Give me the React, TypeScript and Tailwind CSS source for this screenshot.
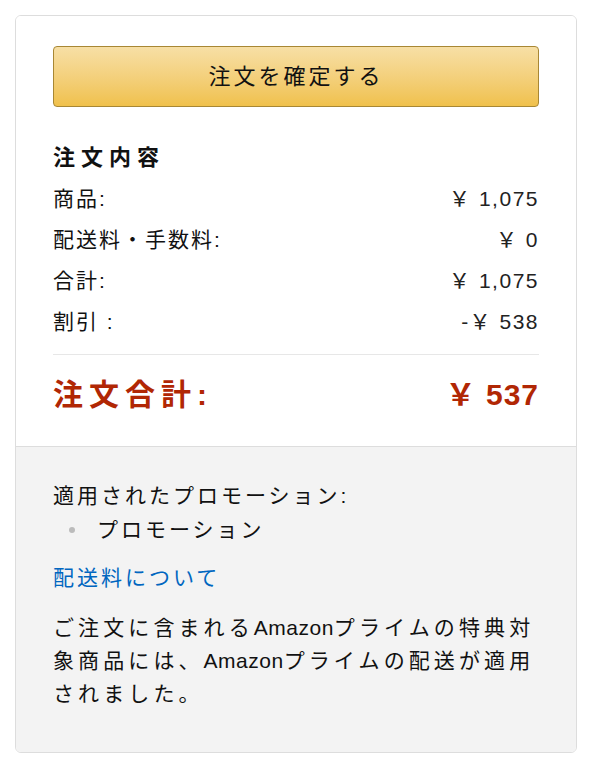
const jp = "font-['Liberation_Sans','Noto_Sans_CJK_JP',sans-serif]";

const rows = [
  { label: "商品:", value: "￥ 1,075" },
  { label: "配送料・手数料:", value: "￥ 0" },
  { label: "合計:", value: "￥ 1,075" },
  { label: "割引 :", value: "-￥ 538" },
];

export default function App() {
  return (
    <div className={`min-h-[776px] bg-white p-[15px] text-[#111] ${jp}`}>
      <div className="w-[562px] rounded-[6px] border border-[#dddddd] overflow-hidden">
        {/* SUMMARY */}
        <div className="px-[37px] pt-[30px] pb-[13px] bg-white">
          <button className="w-full h-[61px] rounded-[4px] border border-[#a88734] bg-gradient-to-b from-[#f7dfa5] to-[#f0c14b] text-[22px] tracking-[3px] text-[#111]">
            注文を確定する
          </button>

          <div className="mt-[30px] h-[41px] flex items-center text-[22px] font-bold tracking-[6px]">
            注文内容
          </div>

          {rows.map((r) => (
            <div
              key={r.label}
              className="h-[41px] flex items-center justify-between text-[21px]"
            >
              <span className="tracking-[2px]">{r.label}</span>
              <span className="text-[#222] tracking-[1.5px]">{r.value}</span>
            </div>
          ))}

          <div className="mt-[12px] border-t border-[#e7e7e7]" />

          <div className="h-[78px] flex items-center justify-between text-[#b12704] font-bold">
            <span className="text-[30px] tracking-[6px]">注文合計:</span>
            <span className="text-[30px] tracking-[1px]">￥ 537</span>
          </div>
        </div>

        {/* PROMOTIONS */}
        <div className="bg-[#f3f3f3] border-t border-[#dddddd] px-[37px] pt-[32px] pb-[42px] text-[21px] tracking-[3px]">
          <div className="h-[34px] flex items-center">適用されたプロモーション:</div>
          <div className="h-[34px] flex items-center">
            <span className="ml-[16px] mr-[22px] w-[6px] h-[6px] rounded-full bg-[#bbbbbb]" />
            <span>プロモーション</span>
          </div>
          <div className="mt-[14px] h-[34px] flex items-center">
            <a href="#" className="text-[#0066c0]">
              配送料について
            </a>
          </div>
          <p className="mt-[16px] leading-[33px] tracking-[4.1px]">
            ご注文に含まれる<span className="tracking-[0.5px]">Amazon</span>プライムの特典対
            <br />
            象商品には、<span className="tracking-[0.5px]">Amazon</span>プライムの配送が適用
            <br />
            されました。
          </p>
        </div>
      </div>
    </div>
  );
}
